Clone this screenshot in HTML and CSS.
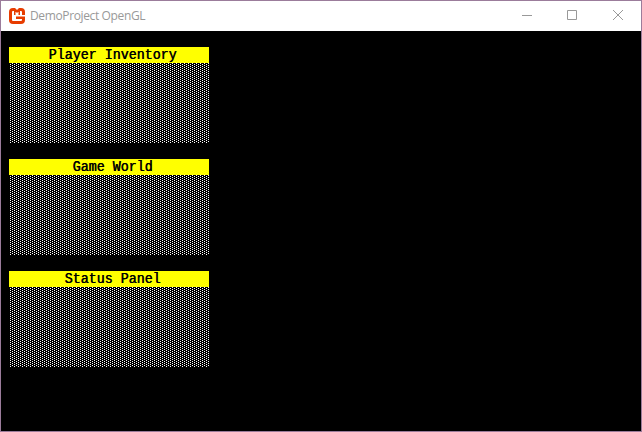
FILE: index.html
```html
<!DOCTYPE html>
<html lang="en">
<head>
<meta charset="utf-8">
<title>DemoProject OpenGL</title>
<link rel="stylesheet" href="styles.css">
</head>
<body>
<div class="window">
  <header class="titlebar">
    <svg class="logo" width="16" height="16" viewBox="0 0 16 16" aria-hidden="true">
      <path d="M4 0H6L8 2L10 0H12Q16 0 16 4V7H13V4Q13 3 12 3H11V7H9.500V4H9L8 5L7 4H6.500V7H5V3H4Q3 3 3 4V12Q3 13 4 13H12Q13 13 13 12V11H7V8.500H16V12Q16 16 12 16H4Q0 16 0 12V4Q0 0 4 0Z" fill="#e73c00"/>
    </svg>
    <span class="title">DemoProject OpenGL</span>
    <div class="controls">
      <svg width="46" height="29" viewBox="0 0 46 29"><path d="M18 14.5H28" stroke="#999"/></svg>
      <svg width="45" height="29" viewBox="0 0 45 29"><path d="M17.5 9.500H26.500V18.500H17.500Z" fill="none" stroke="#999"/></svg>
      <svg width="46" height="29" viewBox="0 0 46 29"><path d="M18 9L28 19M28 9L18 19" stroke="#999"/></svg>
    </div>
  </header>
  <main class="screen">
    <section class="panel"><h2 class="heading"><span>Player Inventory</span></h2><div class="shade"></div></section>
    <section class="panel"><h2 class="heading"><span>Game World</span></h2><div class="shade"></div></section>
    <section class="panel"><h2 class="heading"><span>Status Panel</span></h2><div class="shade"></div></section>
  </main>
</div>
</body>
</html>
```
FILE: styles.css
```css
* { box-sizing: border-box; }
body { margin: 0; }
.window {
  width: 642px;
  height: 432px;
  border: 1px solid #9b7c9b;
  background: #000;
  display: flex;
  flex-direction: column;
}
.titlebar {
  height: 30px;
  background: #fff;
  display: flex;
  align-items: center;
  padding-left: 8px;
}
.logo { display: block; margin-top: -1px; }
.title {
  margin-left: 5px;
  font: 12px/16px "Open Sans", "Noto Sans", sans-serif;
  letter-spacing: -0.37px;
  color: #999;
}
.controls { margin-left: auto; display: flex; height: 29px; align-self: flex-start; }
.controls svg { display: block; }
.screen {
  flex: 1;
  padding: 16px 8px;
  display: flex;
  flex-direction: column;
  gap: 16px;
}
.panel { width: 200px; }
.heading {
  margin: 0;
  height: 16px;
  padding-left: 7px;
  background: #ff0;
  color: #000;
  text-align: center;
  font: 13.333px/17px "Liberation Mono", monospace;
}
.heading span {
  display: inline-block;
  transform: scaleY(1.1);
  text-shadow: 0.6px 0 #000;
}
/* Light shade: one lit pixel in four, shifted by two on alternate rows */
.shade {
  height: 80px;
  background: url("data:image/svg+xml,%3Csvg xmlns='http://www.w3.org/2000/svg' width='4' height='2' shape-rendering='crispEdges'%3E%3Cpath d='M3 0h1v1H3zM1 1h1v1H1z' fill='%23fff'/%3E%3C/svg%3E") 0 0 / 4px 2px;
}
```
